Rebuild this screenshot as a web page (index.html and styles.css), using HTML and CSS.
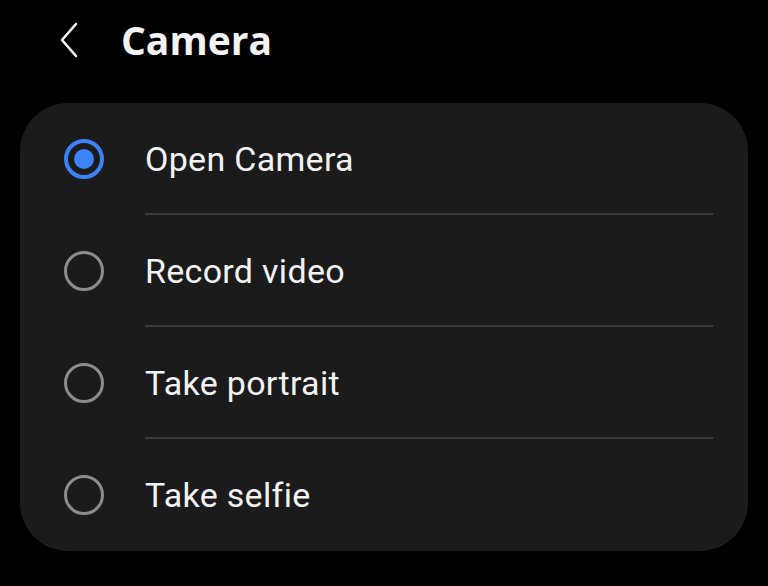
FILE: index.html
```html
<html>
    <head>
        <link rel="stylesheet" href="styles.css">
    </head>
    <body>
        <div class="header">
            <svg class="back" width="24" height="36" viewBox="0 0 24 36">
                <path d="M18 2 L4 18 L18 34" fill="none" stroke="#f2f2f2" stroke-width="2.6" stroke-linecap="round" stroke-linejoin="round"/>
            </svg>
            <span class="title">Camera</span>
        </div>
        <div class="card">
            <div class="row">
                <span class="radio radio-on"></span>
                <span class="label">Open Camera</span>
            </div>
            <div class="row">
                <span class="radio"></span>
                <span class="label">Record video</span>
            </div>
            <div class="row">
                <span class="radio"></span>
                <span class="label">Take portrait</span>
            </div>
            <div class="row">
                <span class="radio"></span>
                <span class="label">Take selfie</span>
            </div>
        </div>
    </body>
</html>
```

FILE: styles.css
```css
body {
    margin: 0;
    background-color: #000;
    font-family: Roboto, "Noto Sans", sans-serif;
    color: #f2f2f2;
}

.header {
    display: flex;
    align-items: center;
    height: 79px;
    padding-left: 58px;
}

.back {
    display: block;
    margin-right: 39px;
}

.title {
    font-family: "Open Sans", Roboto, sans-serif;
    font-size: 39px;
    font-weight: 700;
}

.card {
    margin: 24px 20px 0 20px;
    background-color: #1b1b1b;
    border-radius: 48px;
}

.row {
    display: flex;
    align-items: center;
    height: 112px;
    position: relative;
}

.row:not(:last-child)::after {
    content: "";
    position: absolute;
    left: 125px;
    right: 35px;
    bottom: 0;
    height: 2px;
    background-color: #3a3a3a;
}

.radio {
    box-sizing: border-box;
    width: 40px;
    height: 40px;
    margin-left: 44px;
    margin-right: 41px;
    border: 3px solid #8c8c8c;
    border-radius: 50%;
    display: flex;
    align-items: center;
    justify-content: center;
}

.radio-on {
    border: 4px solid #3d82f6;
}

.radio-on::before {
    content: "";
    width: 20px;
    height: 20px;
    border-radius: 50%;
    background-color: #3d82f6;
}

.label {
    font-size: 34px;
    letter-spacing: 0.3px;
}
```
